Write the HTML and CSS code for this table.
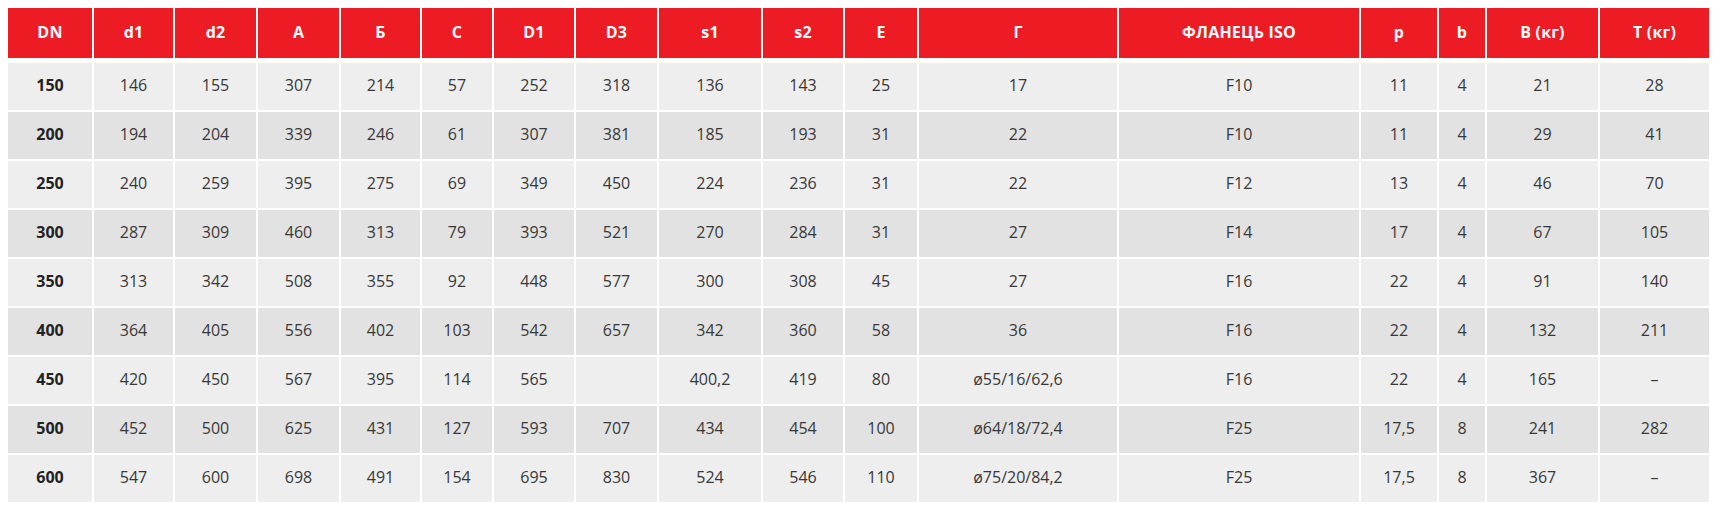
FILE: index.html
```html
<!DOCTYPE html>
<html lang="ru">
<head>
<meta charset="utf-8">
<title>Таблица размеров</title>
<link rel="stylesheet" href="styles.css">
</head>
<body>
<table class="spec">
  <colgroup>
    <col class="c-dn"><col class="c-d1"><col class="c-d2"><col class="c-a"><col class="c-b6"><col class="c-c">
    <col class="c-dd1"><col class="c-d3"><col class="c-s1"><col class="c-s2"><col class="c-e"><col class="c-g">
    <col class="c-fl"><col class="c-p"><col class="c-bb"><col class="c-w"><col class="c-t">
  </colgroup>
  <thead>
    <tr>
      <th>DN</th><th>d1</th><th>d2</th><th>A</th><th>Б</th><th>C</th><th>D1</th><th>D3</th><th>s1</th><th>s2</th><th>E</th><th>Г</th><th>ФЛАНЕЦЬ ISO</th><th>p</th><th>b</th><th>B (кг)</th><th>T (кг)</th>
    </tr>
  </thead>
  <tbody>
    <tr><td class="dn">150</td><td>146</td><td>155</td><td>307</td><td>214</td><td>57</td><td>252</td><td>318</td><td>136</td><td>143</td><td>25</td><td>17</td><td>F10</td><td>11</td><td>4</td><td>21</td><td>28</td></tr>
    <tr><td class="dn">200</td><td>194</td><td>204</td><td>339</td><td>246</td><td>61</td><td>307</td><td>381</td><td>185</td><td>193</td><td>31</td><td>22</td><td>F10</td><td>11</td><td>4</td><td>29</td><td>41</td></tr>
    <tr><td class="dn">250</td><td>240</td><td>259</td><td>395</td><td>275</td><td>69</td><td>349</td><td>450</td><td>224</td><td>236</td><td>31</td><td>22</td><td>F12</td><td>13</td><td>4</td><td>46</td><td>70</td></tr>
    <tr><td class="dn">300</td><td>287</td><td>309</td><td>460</td><td>313</td><td>79</td><td>393</td><td>521</td><td>270</td><td>284</td><td>31</td><td>27</td><td>F14</td><td>17</td><td>4</td><td>67</td><td>105</td></tr>
    <tr><td class="dn">350</td><td>313</td><td>342</td><td>508</td><td>355</td><td>92</td><td>448</td><td>577</td><td>300</td><td>308</td><td>45</td><td>27</td><td>F16</td><td>22</td><td>4</td><td>91</td><td>140</td></tr>
    <tr><td class="dn">400</td><td>364</td><td>405</td><td>556</td><td>402</td><td>103</td><td>542</td><td>657</td><td>342</td><td>360</td><td>58</td><td>36</td><td>F16</td><td>22</td><td>4</td><td>132</td><td>211</td></tr>
    <tr><td class="dn">450</td><td>420</td><td>450</td><td>567</td><td>395</td><td>114</td><td>565</td><td></td><td>400,2</td><td>419</td><td>80</td><td>ø55/16/62,6</td><td>F16</td><td>22</td><td>4</td><td>165</td><td>–</td></tr>
    <tr><td class="dn">500</td><td>452</td><td>500</td><td>625</td><td>431</td><td>127</td><td>593</td><td>707</td><td>434</td><td>454</td><td>100</td><td>ø64/18/72,4</td><td>F25</td><td>17,5</td><td>8</td><td>241</td><td>282</td></tr>
    <tr><td class="dn">600</td><td>547</td><td>600</td><td>698</td><td>491</td><td>154</td><td>695</td><td>830</td><td>524</td><td>546</td><td>110</td><td>ø75/20/84,2</td><td>F25</td><td>17,5</td><td>8</td><td>367</td><td>–</td></tr>
  </tbody>
</table>
</body>
</html>
```

FILE: styles.css
```css
html, body {
  background: #ffffff;
}
body {
  margin: 8px;
  font-family: "Open Sans", "Liberation Sans", sans-serif;
  color: #333333;
}
.spec {
  border-collapse: separate;
  border-spacing: 0;
  table-layout: fixed;
  width: 1701px;
}
.c-dn { width: 84px; }
.c-d1 { width: 81px; }
.c-d2 { width: 83px; }
.c-a { width: 83px; }
.c-b6 { width: 81px; }
.c-c { width: 72px; }
.c-dd1 { width: 82px; }
.c-d3 { width: 83px; }
.c-s1 { width: 104px; }
.c-s2 { width: 82px; }
.c-e { width: 74px; }
.c-g { width: 200px; }
.c-fl { width: 242px; }
.c-p { width: 78px; }
.c-bb { width: 48px; }
.c-w { width: 113px; }
.c-t { width: 111px; }

.spec th,
.spec td {
  padding: 0 4px 3px;
  text-align: center;
  vertical-align: middle;
  border-left: 2px solid #ffffff;
  box-sizing: border-box;
}
.spec th:first-child,
.spec td:first-child {
  border-left: 0;
}
.spec th {
  background: #ed1c24;
  color: #ffffff;
  font-weight: 700;
  font-size: 16px;
  letter-spacing: 0.2px;
  height: 50px;
}
.spec td {
  height: 49px;
  border-top: 2px solid #ffffff;
  font-size: 16px;
  font-weight: 400;
  color: #383838;
}
.spec tbody tr:first-child td {
  height: 52px;
  border-top-width: 5px;
}
.spec tbody tr:nth-child(odd) td {
  background: #eeeeee;
}
.spec tbody tr:nth-child(even) td {
  background: #e2e2e2;
}
.spec td.dn {
  font-weight: 700;
  color: #222222;
}
```
